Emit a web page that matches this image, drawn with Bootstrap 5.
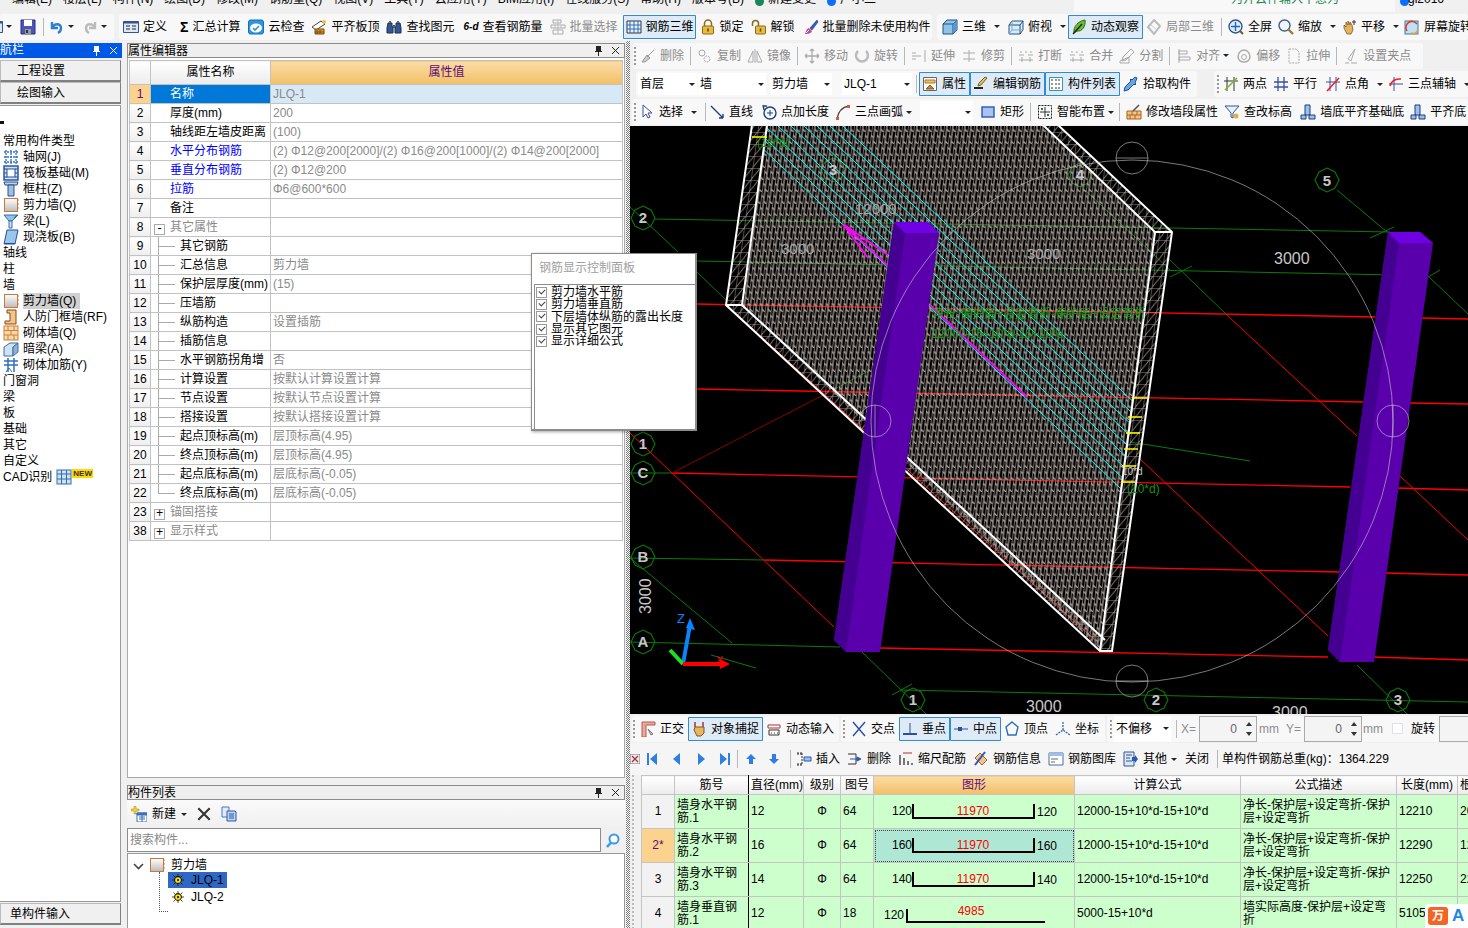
<!DOCTYPE html>
<html lang="zh-CN">
<head>
<meta charset="UTF-8">
<title>钢筋三维</title>
<link href="https://cdn.jsdelivr.net/npm/bootstrap@5.3.1/dist/css/bootstrap.min.css" rel="stylesheet">
<style>
html,body{height:928px;overflow:hidden}
body{width:1468px;position:relative;background:#f0f0f0;color:#000;font:12px/16px "Liberation Sans","Noto Sans CJK SC",sans-serif}
.ic{width:16px;height:16px;flex:none}
.ic-s{width:12px;height:12px}
.top-menu{height:12px;overflow:hidden;display:flex;white-space:nowrap;gap:11px}
.top-menu>span{margin-top:-9px;flex:none}
.menu-first{margin-left:12px}
.menu-dot{width:9px;height:9px;border-radius:50%;margin:-3px -7px 0 0;flex:none}
.top-hint{margin:0 0 0 auto;width:321px;height:12px;background:#f8f8f8;padding-left:157px;flex:none;overflow:hidden}
.top-hint span{display:block;margin-top:-9px;color:#198754}
.top-user{width:73px;display:flex;gap:6px;margin-left:-11px;padding-left:5px;flex:none;overflow:hidden}
.top-user span{margin-top:-9px}
.tools-row{display:flex;align-items:center;white-space:nowrap;overflow:hidden;gap:1px}
.row-a,.row-b,.row-e{height:29px}
.row-c,.row-d{height:28px}
.row-f{height:32px;background:#f5f5f5}
.tb-band{display:flex;align-items:center;height:26px;background:#f8f8f8;border-radius:3px;flex:none}
.tb-item{display:flex;align-items:center;gap:4px;padding:0 3px;height:24px;flex:none}
.tb-off{color:#8c8c8c}
.tb-on{background:#deebf7;box-shadow:inset 0 0 0 1px #2f8bd8;border-radius:1px}
.tb-on.box-51{width:51px}
.tb-on.box-73{width:73px}
.tb-on.box-75{width:75px}
.caret-mk{width:0;height:0;border:3px solid transparent;border-top:3px solid #222;border-bottom:0;flex:none;margin:0 5px}
.caret-mk.car-nl{margin-left:0}
.caret-mk.car-s{margin-right:2px}
.caret-mk.car-r4{margin:0 4px 0 0}
.tb-sep{width:1px;height:18px;background:#b8b8b8;margin:0 4px;flex:none}
.tb-sep.sep-mid{margin:0 3px}
.tb-sep.sep-a{margin:0 3px 0 4px}
.tb-sep.sep-b{margin:0 2px 0 4px}
.tb-sep.sep-c{margin:0 0 0 3px}
.tb-sep.sep-d{margin:0 0 0 7px}
.tb-sep.sep-e{margin:0 0 0 4px}
.tb-sep.sep-f{margin:0 4px 0 5px}
.grip{width:2px;height:18px;margin:0 4px;background:repeating-linear-gradient(#999 0 2px,transparent 2px 4px);flex:none}
.grip.gr-b{margin:0 1px}
.grip.gr-c{margin:0 1px 0 3px}
.grip.gr-d{margin:0 0 0 2px}
.grip.gr-e{margin:0 2px 0 1px}
.grip.gr-f{margin:0 3px 0 2px}
.grip.gr-g{margin:0 2px 0 3px}
.mg1{margin-left:1px}
.mg2{margin-left:2px}
.mg3{margin-left:3px}
.mg4{margin-left:4px}
.mg6{margin-left:6px}
.mg7{margin-left:7px}
.mg8{margin-left:8px}
.mg-n3{margin-left:-3px}
.mg-n16{margin-left:-16px}
.band-a1{width:114px}
.band-a2{width:813px;margin-left:4px;padding-left:1px}
.band-a3{width:531px;margin-left:4px;padding-left:0}
.band-b{width:790px;margin-left:3px}
.band-c1{width:561px;margin-left:6px}
.band-c2{width:260px;margin-left:16px}
.band-d{width:836px;margin-left:2px}
.band-e1{width:207px;margin-left:2px}
.band-e2{width:264px;margin-left:1px}
.band-e3{width:361px;margin-left:1px}
.fake-select{display:flex;align-items:center;justify-content:space-between;background:#fff;height:22px;padding:0 2px;flex:none}
.sel-59{width:59px;margin-left:2px}
.sel-68{width:68px;margin-left:1px}
.sel-62{width:62px;margin-left:4px}
.sel-70{width:70px;margin-left:10px}
.sel-53{width:53px;margin-left:8px;justify-content:flex-end}
.sel-57{width:57px;height:26px}
.main-area{display:flex;height:887px}
.nav-pane{width:122px;padding-top:2px;flex:none;display:flex;flex-direction:column}
.nav-title{height:15px;background:#0058e6;color:#fff;display:flex;align-items:center;justify-content:space-between;padding-right:4px;overflow:hidden;line-height:15px;flex:none}
.nav-title b{font-weight:400;margin-left:-12px;white-space:nowrap}
.pin-x{display:flex;gap:8px;align-items:center}
.nav-btn.btn{display:block;width:121px;height:22px;padding:0 0 0 16px;text-align:left;background:#f0f0f0;border:1px solid #bbb;border-right-color:#808080;border-bottom:2px solid #808080;border-radius:0;font-size:12px;line-height:20px;color:#000;flex:none}
.nav-first{margin-top:2px}
.nav-btn.nav-last{padding-left:9px;margin:1px 0 3px}
.nav-tree{flex:1;background:#fff;border:1px solid #9a9a9a;border-left:0;width:121px;margin-top:1px;padding-top:27px;position:relative}
.nav-tree .list-group-item{padding:0 0 0 3px;border:0;height:16px;line-height:16px;font-size:12px;background:transparent;display:flex;align-items:center;gap:4px;white-space:nowrap;color:#000}
.nav-tree .pick span{background:#d0d0d0}
.nav-mark{position:absolute;left:0;top:15px;width:4px;height:3px;background:#111}
.new-mk{font:700 8px/9px "Liberation Sans",sans-serif;background:#ffd800;color:#333;align-self:flex-start;margin-left:-4px;padding:0 1px}
.prop-pane{width:504px;padding:2px 1px 0 5px;flex:none;display:flex;flex-direction:column}
.pane-title{height:15px;background:#efefef;border:1px solid #8c8c8c;display:flex;justify-content:space-between;align-items:center;padding-right:4px;line-height:14px;flex:none}
.pane-low{margin-top:7px}
.prop-body{height:720px;background:#fff;border:1px solid #aaa;border-top:0;padding:2px 1px;flex:none}
.table.grid-prop{width:494px;table-layout:fixed;margin:0;border-collapse:collapse;font-size:12px}
.table.grid-prop>:not(caption)>*>*{padding:0 2px;height:19px;line-height:17px;border:1px solid #c2c2c2;box-shadow:none;background:#fff;color:#000;white-space:nowrap;overflow:hidden;position:relative;vertical-align:middle}
.table.grid-prop thead th{height:24px;font-weight:400;text-align:center;background:linear-gradient(#fff,#ececec)}
.table.grid-prop thead th.hd-on{background:linear-gradient(#fbdca6,#f2c066);color:#5e0a78}
.table.grid-prop td.rn{text-align:center;background:linear-gradient(#fff,#eee)}
.table.grid-prop td.rn-on{background:#fbd38e;color:#5e0a78}
.table.grid-prop td.nm{padding-left:19px}
.table.grid-prop td.nm-on{background:#0078d7;color:#fff}
.table.grid-prop td.vl{color:#8a8a8a}
.table.grid-prop td.vl-on{background:#d7e8f7;color:#8a8a8a}
.table.grid-prop td.lnk{color:#0000ff}
.table.grid-prop td.gr{color:#8a8a8a}
.table.grid-prop td.sub{padding-left:29px}
.table.grid-prop td.sub::before{content:"";position:absolute;left:7px;top:-1px;bottom:-1px;border-left:1px solid #aaa}
.table.grid-prop td.sub::after{content:"";position:absolute;left:7px;top:9px;width:17px;border-top:1px solid #aaa}
.table.grid-prop td.sub-end::before{bottom:9px}
.cw-21{width:21px}
.cw-120{width:120px}
.cw-33{width:33px}
.cw-74{width:74px}
.cw-55{width:55px}
.cw-37{width:37px}
.cw-201{width:201px}
.cw-166{width:166px}
.cw-156{width:156px}
.cw-61{width:61px}
.cw-24{width:24px}
.tg-box{display:inline-flex;width:11px;height:11px;border:1px solid #aaa;margin:0 5px 0 1px;vertical-align:-1px;align-items:center;justify-content:center;font:12px/9px "Liberation Mono",monospace;color:#000}
.list-tools{height:28px;background:linear-gradient(#fafafa,#f0f0f0);display:flex;align-items:center;gap:5px;padding-left:4px;flex:none}
.search-box{height:25px;flex:none}
.search-box .form-control{height:24px;border:1px solid #8c8c8c;border-radius:0;font-size:12px;padding:0 2px;background:#fff;color:#888;line-height:20px}
.search-box .form-control::placeholder{color:#888}
.search-box .input-group-text{width:25px;padding:0;justify-content:center;border:0;border-radius:0;background:#f0f0f0}
.comp-tree{flex:1;background:#fff;border:1px solid #9a9a9a;border-bottom:0;position:relative}
.tree-line{position:absolute;display:flex;align-items:center;gap:7px;white-space:nowrap;height:16px}
.tl-root{left:21px;top:3px;gap:6px}
.tl-one{left:40px;top:18px}
.tl-two{left:44px;top:35px}
.tree-hit{background:#2f67c4;color:#000;padding:0 3px 0 4px}
.tree-dots{position:absolute;left:31px;top:18px;width:9px;height:40px;border-left:1px dotted #555;border-bottom:1px dotted #555}
.tree-arrow{position:absolute;left:5px;top:9px}
.splitter{width:4px;flex:none;background:repeating-conic-gradient(#777 0 25%,#fff 0 50%) 0 0/2px 2px}
.right-pane{width:838px;flex:none;position:relative;overflow:hidden}
.canvas-3d{display:block;width:838px;height:588px;background:#000}
.num-box{width:58px;height:26px;margin-left:3px;background:#f4f4f4;border:1px solid #aaa;display:flex;align-items:center;justify-content:flex-end;color:#666;padding-right:19px;position:relative;flex:none}
.num-box::after{content:"";position:absolute;right:4px;top:5px;border:3px solid transparent;border-bottom:4px solid #333;border-top:0}
.num-box::before{content:"";position:absolute;right:4px;bottom:5px;border:3px solid transparent;border-top:4px solid #333;border-bottom:0}
.num-end{width:40px;padding-right:0;margin-left:4px}
.num-end::before,.num-end::after{display:none}
.lead-f{width:13px;flex:none;display:flex}
.rebar-wrap{position:relative;padding-left:11px;height:160px;background:repeating-linear-gradient(#bbb 0 2px,#f0f0f0 2px 4px) 2px 0/2px 100% no-repeat,#f0f0f0}
.table.grid-rebar{width:840px;table-layout:fixed;margin:0;border-collapse:collapse;font-size:12px}
.table.grid-rebar>:not(caption)>*>*{padding:0 2px;height:34px;line-height:13px;border:1px solid #c4c4c4;box-shadow:none;background:#ccffcc;color:#000;vertical-align:middle;overflow:hidden}
.table.grid-rebar thead th{height:19px;font-weight:400;text-align:center;white-space:nowrap;background:linear-gradient(#fff,#ececec);line-height:16px}
.table.grid-rebar thead th.hd-on{background:linear-gradient(#fbdca6,#f2c066);color:#5e0a78}
.table.grid-rebar td.rn{text-align:center;background:#f2f2f2}
.table.grid-rebar td.rn-on{background:#fbd38e;color:#5e0a78}
.table.grid-rebar td.bar-end,.table.grid-rebar th.bar-end{border-right:1px solid #000}
.table.grid-rebar td.mid{text-align:center}
.table.grid-rebar td.shp{padding:0}
.table.grid-rebar td.shp-on{background:#aee8d4;outline:1px dotted #444;outline-offset:-2px}
.shp-svg{display:block;width:200px;height:32px;font:12px "Liberation Sans",sans-serif}
.float-panel{position:absolute;left:531px;top:253px;width:166px;height:178px;background:#fff;border:1px solid #8c8c8c;border-width:1px 2px 2px 1px;box-shadow:1px 1px 3px rgba(0,0,0,.35);z-index:5}
.float-title{height:30px;padding:6px 0 0 7px;color:#a0a0a0;line-height:16px}
.float-list{position:absolute;left:2px;right:0;top:30px;bottom:0;border:1px solid #8c8c8c;border-right:0;border-bottom:0;padding:1px 0 0 1px;line-height:12px}
.float-list .form-check{display:flex;align-items:center;gap:4px;height:12.3px;min-height:0;padding:0;margin:0;white-space:nowrap}
.float-list .form-check-input{width:11px;height:11px;margin:0;float:none;border:1px solid #999;border-radius:0;background-color:#fff;background-image:none;position:relative}
.float-list .form-check-input::after{content:"";position:absolute;left:2px;top:1px;width:6px;height:4px;border-left:1.5px solid #444;border-bottom:1.5px solid #444;transform:rotate(-45deg)}
.form-check-input.rotate-box{flex:none;width:11px;height:11px;margin:0 0 0 9px;border-radius:0}
.badge-float{position:absolute;right:0;bottom:0;width:43px;height:24px;background:#fff;border-radius:4px 0 0 0;display:flex;align-items:center;gap:4px;padding-left:3px;z-index:6}
.badge-wan{width:20px;height:18px;background:#f26522;border-radius:3px;color:#fff;text-align:center;font-weight:700;line-height:18px}
.badge-a{color:#1e88e5;font:700 17px/18px "Liberation Sans",sans-serif}
.cad-txt{font:10px/14px "Liberation Sans","Noto Sans CJK SC",sans-serif;fill:#c8c8c8}
.cad-big{font:16px "Liberation Sans",sans-serif;fill:#c8c8c8}
.cad-lbl{font:700 15px "Liberation Sans",sans-serif;fill:#c8c8c8;text-anchor:middle}
.cad-dim{font:15px "Liberation Sans",sans-serif;fill:#a8a8a8}
.cad-grn{font:12px "Liberation Sans","Noto Sans CJK SC",sans-serif;fill:#0c9a0c}
.cad-z{font:13px "Liberation Sans",sans-serif;fill:#0a84ff}
.cad-x{font:11px "Liberation Sans",sans-serif;fill:#f00}
.sig{font-size:14px}
.six-d{font-size:10px}
</style>
</head>
<body>

<svg width="0" height="0" class="position-absolute">
<defs>
<symbol id="i-save" viewBox="0 0 16 16"><path d="M1 1h14v14H1z" fill="#4a55b8" stroke="#2a2f80"/><path d="M4 1h8v6H4z" fill="#fff"/><path d="M5 10h6v5H5z" fill="#999"/><path d="M6 11h2v3H6z" fill="#333"/></symbol>
<symbol id="i-undo" viewBox="0 0 16 16"><path d="M3 3v6h6M3 9c2-5 9-5 9 0 0 2-1 4-3 5" fill="none" stroke="#2f7fd0" stroke-width="2.4"/></symbol>
<symbol id="i-redo" viewBox="0 0 16 16"><path d="M13 3v6H7M13 9c-2-5-9-5-9 0 0 2 1 4 3 5" fill="none" stroke="#bbb" stroke-width="2.4"/></symbol>
<symbol id="i-define" viewBox="0 0 16 16"><path d="M.5 2.5h15v11H.5z" fill="#dfe8f5" stroke="#33558f"/><path d="M.5 2.5h15v2H.5z" fill="#33558f"/><path d="M3 7h4M3 10h4M9 7h4M9 10h4" stroke="#223" /></symbol>
<symbol id="i-cloud" viewBox="0 0 16 16"><rect x=".5" y="1" width="15" height="14" rx="2" fill="#2e95e0" stroke="#1a6fb8"/><ellipse cx="8" cy="9" rx="6" ry="4.5" fill="#fff"/><path d="M5 9l2 2 4-4" fill="none" stroke="#2e95e0" stroke-width="1.6"/></symbol>
<symbol id="i-flush" viewBox="0 0 16 16"><path d="M1 8l9-6 4 3-9 6z" fill="#fff" stroke="#444"/><path d="M4 10h9v5H4z" fill="#e09a2a" stroke="#7a4a10"/><path d="M6 11v4M9 11v4M4 13h9" stroke="#7a4a10"/><circle cx="13" cy="3" r="2" fill="#e9c63a"/></symbol>
<symbol id="i-find" viewBox="0 0 16 16"><path d="M2 4h4v3l1 2v5H1V9zM10 4h4l1 5v5H9V9l1-2z" fill="#33568f" stroke="#1b2f55"/><path d="M7 6h2v3H7z" fill="#556"/><path d="M3 2h2v2H3zM11 2h2v2h-2z" fill="#667"/></symbol>
<symbol id="i-batch" viewBox="0 0 16 16"><path d="M3 1h8v3H3zM1 6h14v3H1zM3 11h10v4H3z" fill="none" stroke="#aaa"/><path d="M8 1v14M5 6v3M11 6v3" stroke="#bbb"/></symbol>
<symbol id="i-grid3d" viewBox="0 0 16 16"><path d="M1 2h14v12H1z" fill="#e8f1fb" stroke="#333"/><path d="M4 2v12M8 2v12M12 2v12M1 6h14M1 10h14" stroke="#2d6fb8"/></symbol>
<symbol id="i-lock" viewBox="0 0 16 16"><path d="M4.500 7V4.500a3.500 3.500 0 0 1 7 0V7" fill="none" stroke="#8a6a20" stroke-width="1.500"/><rect x="2.500" y="7" width="11" height="8" rx="1" fill="#e8bb3a" stroke="#8a6a20"/><path d="M8 9.500v3" stroke="#5a3f10" stroke-width="1.500"/></symbol>
<symbol id="i-unlock" viewBox="0 0 16 16"><path d="M1.500 7V4.500a3 3 0 0 1 6 0V7" fill="none" stroke="#8a6a20" stroke-width="1.500"/><rect x="4.500" y="7" width="10" height="8" rx="1" fill="#e8bb3a" stroke="#8a6a20"/><path d="M9.500 9.500v3" stroke="#5a3f10" stroke-width="1.500"/></symbol>
<symbol id="i-brush" viewBox="0 0 16 16"><path d="M14 1L7 9l2 2 6-8z" fill="#3b5bb5" stroke="#223a80" stroke-width=".6"/><path d="M6 9l3 3c-1 3-5 3-7 3 1-2 1-5 4-6z" fill="#c24aa0"/><path d="M3 14l3-3" stroke="#fff"/></symbol>
<symbol id="i-cube" viewBox="0 0 16 16"><path d="M1 5l4-4h10v10l-4 4H1z" fill="#8fc3ea" stroke="#24517f"/><path d="M1 5h10v10M11 5l4-4" fill="none" stroke="#24517f"/><path d="M11 5l4-4v10l-4 4z" fill="#5a97cc"/></symbol>
<symbol id="i-wire" viewBox="0 0 16 16"><path d="M4 2h11v9l-3 4H1V6z" fill="#d9ecf9" stroke="#24517f"/><path d="M1 6h11v9M12 6l3-4" fill="none" stroke="#24517f"/><path d="M1 15l3-4h11M4 2v9" fill="none" stroke="#7aa7cf"/></symbol>
<symbol id="i-orbit" viewBox="0 0 16 16"><path d="M3 14C2 8 7 2 14 1c1 6-3 12-8 11z" fill="#6cc02c" stroke="#2f6a10"/><path d="M2 15L11 5" stroke="#222" stroke-width="1.400"/></symbol>
<symbol id="i-local" viewBox="0 0 16 16"><path d="M8 1l6 6-6 8-6-7z" fill="none" stroke="#bbb" stroke-width="2"/><path d="M5 6l6 5" stroke="#ccc"/></symbol>
<symbol id="i-full" viewBox="0 0 16 16"><circle cx="7.500" cy="7.500" r="6.500" fill="#dfeefa" stroke="#33568f" stroke-width="1.400"/><path d="M7.500 3v9M3 7.500h9" stroke="#1f66c0" stroke-width="1.400"/><path d="M12 12l3 3" stroke="#7a5a20" stroke-width="2"/></symbol>
<symbol id="i-zoom" viewBox="0 0 16 16"><circle cx="6.500" cy="6.500" r="5.500" fill="#eef5fb" stroke="#3f5f8f" stroke-width="1.400"/><path d="M10 10l5 5" stroke="#a07a30" stroke-width="2.400"/></symbol>
<symbol id="i-hand" viewBox="0 0 16 16"><path d="M3 9V6l2 2V3l2 3V2l2 4V3l2 3 1 5-2 4H6z" fill="#e6b45e" stroke="#7a5a20" stroke-width=".8"/><path d="M13 1v5M11 3h4" stroke="#333"/></symbol>
<symbol id="i-rotate" viewBox="0 0 16 16"><rect x="1" y="2" width="13" height="13" fill="#bfe0f5" stroke="#2f7fb8"/><path d="M3 12A6 6 0 0 1 13 5" fill="none" stroke="#e23a2a" stroke-width="1.600"/><path d="M14 11a5 5 0 0 1-7 3" fill="none" stroke="#e8a020" stroke-width="1.600"/></symbol>
<symbol id="i-del" viewBox="0 0 16 16"><path d="M14 2L7 9M2 14l5-7 3 3-5 4z" fill="#ccc" stroke="#999"/></symbol>
<symbol id="i-copy" viewBox="0 0 16 16"><circle cx="5" cy="5" r="3" fill="none" stroke="#aaa"/><circle cx="10" cy="11" r="3" fill="none" stroke="#aaa" stroke-dasharray="2 1"/></symbol>
<symbol id="i-mirror" viewBox="0 0 16 16"><path d="M8 1v14M6 3L1 14h5zM10 3l5 11h-5z" fill="none" stroke="#aaa"/></symbol>
<symbol id="i-move" viewBox="0 0 16 16"><path d="M8 1v14M1 8h14M8 1L6 3M8 1l2 2M8 15l-2-2M8 15l2-2M1 8l2-2M1 8l2 2M15 8l-2-2M15 8l-2 2" fill="none" stroke="#aaa" stroke-width="1.300"/></symbol>
<symbol id="i-spin" viewBox="0 0 16 16"><path d="M4 3a6 6 0 1 0 8 0" fill="none" stroke="#bbb" stroke-width="2.500"/></symbol>
<symbol id="i-extend" viewBox="0 0 16 16"><path d="M14 2v12M1 8h9M1 5h4M1 11h4" fill="none" stroke="#aaa"/></symbol>
<symbol id="i-trim" viewBox="0 0 16 16"><path d="M8 2v12M2 5h12M2 11h12" fill="none" stroke="#aaa"/></symbol>
<symbol id="i-break" viewBox="0 0 16 16"><path d="M1 7h5M10 7h5M3 3v2M8 3v2M13 3v2M1 12h14M4 9v5M12 9v5" fill="none" stroke="#aaa"/></symbol>
<symbol id="i-split" viewBox="0 0 16 16"><path d="M1 13l9-4v6H1zM12 1l3 3-8 8-4 1 1-4z" fill="none" stroke="#aaa"/></symbol>
<symbol id="i-align" viewBox="0 0 16 16"><path d="M3 1v14M3 3h8v3H3zM3 9h11v3H3z" fill="none" stroke="#aaa"/></symbol>
<symbol id="i-offset" viewBox="0 0 16 16"><path d="M8 2c4 0 6 4 6 7s-3 5-6 5-6-2-6-5 2-7 6-7z" fill="none" stroke="#aaa" stroke-width="1.500"/><circle cx="8" cy="9" r="2.500" fill="none" stroke="#aaa"/></symbol>
<symbol id="i-stretch" viewBox="0 0 16 16"><path d="M3 1h7l3 3v11H3z" fill="none" stroke="#aaa" stroke-dasharray="2 1"/></symbol>
<symbol id="i-grip" viewBox="0 0 16 16"><path d="M12 1L5 11l3 2zM2 15h4M8 15h6" fill="none" stroke="#aaa"/></symbol>
<symbol id="i-prop" viewBox="0 0 16 16"><path d="M1.500 1.500h13v13h-13z" fill="#fff" stroke="#666"/><path d="M3 4h10v3H3z" fill="#f0c26a" stroke="#a87820"/><path d="M4 13l4-4 4 4z" fill="#c28a2a" stroke="#7a5a20"/></symbol>
<symbol id="i-edit" viewBox="0 0 16 16"><path d="M1 12h9" stroke="#222" stroke-width="2"/><path d="M14 2L8 9l-3 1 1-3 6-6z" fill="#e5c25a" stroke="#7a5a20"/></symbol>
<symbol id="i-list" viewBox="0 0 16 16"><path d="M1.500 1.500h13v13h-13z" fill="#fff" stroke="#39a"/><path d="M3 4h2M3 8h2M3 12h2M7 4h6M7 8h6M7 12h6" stroke="#333" stroke-dasharray="2 1"/></symbol>
<symbol id="i-pick" viewBox="0 0 16 16"><path d="M14 2l-2-1-3 3-1-1-1 1 1 1-6 6-1 4 4-1 6-6 1 1 1-1-1-1z" fill="#6aa7e0" stroke="#1f4f9f"/></symbol>
<symbol id="i-two" viewBox="0 0 16 16"><path d="M4 1v14M11 1v14M1 5h14M2 14L14 2" fill="none" stroke="#333"/><path d="M2 14L14 2" stroke="#7cb82f" stroke-width="1.600"/></symbol>
<symbol id="i-para" viewBox="0 0 16 16"><path d="M5 1v14M11 1v14M1 6h14M1 11h14" stroke="#3a4fa0" stroke-width="1.300"/></symbol>
<symbol id="i-angle" viewBox="0 0 16 16"><path d="M5 1v14M11 1v14M1 6h14" stroke="#3a4fa0"/><path d="M2 15L14 2" stroke="#e22" stroke-width="1.500"/></symbol>
<symbol id="i-aux" viewBox="0 0 16 16"><path d="M6 1v14M1 8h14" stroke="#3a4fa0"/><path d="M2 10Q4 2 13 3" fill="none" stroke="#e22" stroke-width="1.500"/></symbol>
<symbol id="i-arrow" viewBox="0 0 16 16"><path d="M4 1v12l3-3 2 4 2-1-2-4h4z" fill="#fff" stroke="#3a4fa0"/></symbol>
<symbol id="i-line" viewBox="0 0 16 16"><path d="M2 2l12 12M14 14v-4M14 14h-4" fill="none" stroke="#1b3f80" stroke-width="1.400"/></symbol>
<symbol id="i-addlen" viewBox="0 0 16 16"><circle cx="9" cy="9" r="6" fill="none" stroke="#1b3f80" stroke-width="1.400"/><path d="M9 6v6M6 9h6" stroke="#1b3f80"/><path d="M2 1l1 5M3 2h3" stroke="#1b3f80" stroke-width="1.400"/></symbol>
<symbol id="i-arc" viewBox="0 0 16 16"><path d="M2 15C3 8 7 3 14 2" fill="none" stroke="#444" stroke-width="1.400"/><path d="M1 13h3v3H1zM12 1h3v3h-3z" fill="#e2552a"/></symbol>
<symbol id="i-rect" viewBox="0 0 16 16"><rect x="2" y="3" width="12" height="10" fill="#a8c4ee" stroke="#2a58b5" stroke-width="1.400"/></symbol>
<symbol id="i-smart" viewBox="0 0 16 16"><rect x="1.500" y="1.500" width="13" height="13" fill="none" stroke="#222" stroke-dasharray="2 1"/><path d="M8 3v10M3 8h10" stroke="#333"/><path d="M4 4h2v2H4zM10 10h2v2h-2z" fill="#2a7a2a"/></symbol>
<symbol id="i-segm" viewBox="0 0 16 16"><path d="M1 7h14v8H1z" fill="#f3c48a" stroke="#a8651e"/><path d="M1 11h14M6 7v4M11 7v4M4 11v4M9 11v4" stroke="#a8651e"/><path d="M13 1L7 7" stroke="#555" stroke-width="1.600"/></symbol>
<symbol id="i-elev" viewBox="0 0 16 16"><path d="M1 2h14l-6 7v5l-2-1V9z" fill="#e6f0fa" stroke="#33568f"/><circle cx="12" cy="12" r="2.500" fill="#e0b040"/></symbol>
<symbol id="i-base" viewBox="0 0 16 16"><path d="M5 1h5v10H5zM1 11h5v4H1zM9 11h6v4H9z" fill="#9cc0e8" stroke="#1e3f80"/></symbol>
<symbol id="i-orth" viewBox="0 0 16 16"><path d="M2 1h13v3H6v12H2z" fill="#e8a8a0" stroke="#b85a50"/><path d="M8 8l5 5-2 1z" fill="#ccc" stroke="#777"/></symbol>
<symbol id="i-snap" viewBox="0 0 16 16"><path d="M4 1v5M12 1v5" stroke="#a33" stroke-width="1.500"/><path d="M3 9l1-3h9v6l-3 3H6z" fill="#e8b660" stroke="#7a5a20"/></symbol>
<symbol id="i-dyn" viewBox="0 0 16 16"><path d="M2 4h12v3H2z" fill="#fff" stroke="#a33"/><path d="M3 9h10v5H3z" fill="#fff" stroke="#333"/><path d="M5 12h1M8 12h1M11 12h1" stroke="#333"/></symbol>
<symbol id="i-cross" viewBox="0 0 16 16"><path d="M2 1l12 14M14 1L2 15" stroke="#2a4fa0" stroke-width="1.400"/></symbol>
<symbol id="i-perp" viewBox="0 0 16 16"><path d="M1 13h14" stroke="#2a4fa0" stroke-width="2"/><path d="M8 2v11" stroke="#2a4fa0"/></symbol>
<symbol id="i-midp" viewBox="0 0 16 16"><path d="M1 8h14" stroke="#2a4fa0"/><rect x="5" y="6" width="4" height="4" fill="#2a4fa0"/></symbol>
<symbol id="i-top" viewBox="0 0 16 16"><path d="M8 1l6 5-2 8H4L2 6z" fill="none" stroke="#2a6fb8" stroke-width="1.400"/></symbol>
<symbol id="i-coord" viewBox="0 0 16 16"><path d="M8 1v8M1 14l7-5 7 5" fill="none" stroke="#2a6fb8" stroke-width="1.300" stroke-dasharray="2 1"/></symbol>
<symbol id="i-first" viewBox="0 0 16 16"><path d="M3 2h2v12H3zM13 2v12L6 8z" fill="#2f7fe0"/></symbol>
<symbol id="i-prev" viewBox="0 0 16 16"><path d="M11 2v12L4 8z" fill="#2f7fe0"/></symbol>
<symbol id="i-next" viewBox="0 0 16 16"><path d="M5 2v12l7-6z" fill="#2f7fe0"/></symbol>
<symbol id="i-last" viewBox="0 0 16 16"><path d="M11 2h2v12h-2zM3 2v12l7-6z" fill="#2f7fe0"/></symbol>
<symbol id="i-up" viewBox="0 0 16 16"><path d="M8 3l5 5h-3v5H6V8H3z" fill="#2f7fe0"/></symbol>
<symbol id="i-down" viewBox="0 0 16 16"><path d="M8 13l5-5h-3V3H6v5H3z" fill="#2f7fe0"/></symbol>
<symbol id="i-ins" viewBox="0 0 16 16"><path d="M1 2h5v1H1zM1 13h5v1H1zM6 2v12" stroke="#333" fill="none" stroke-dasharray="2 1"/><path d="M8 6h7v4H8z" fill="#9cc0e8" stroke="#2a58b5"/></symbol>
<symbol id="i-rm" viewBox="0 0 16 16"><path d="M1 3h8M1 13h8M9 3v10" stroke="#333" fill="none"/><path d="M3 8h7V6l4 2-4 2V8" fill="#2a58b5" stroke="#2a58b5"/></symbol>
<symbol id="i-scale" viewBox="0 0 16 16"><path d="M2 14V4M6 14V7M10 14v-4M14 14v-2" stroke="#333" stroke-width="1.300"/><path d="M5 2h9" stroke="#a33"/></symbol>
<symbol id="i-info" viewBox="0 0 16 16"><path d="M2 7l5-5 7 7-5 5z" fill="#f3c48a" stroke="#a8651e"/><path d="M12 1L2 14" stroke="#2a58b5" stroke-width="2"/></symbol>
<symbol id="i-lib" viewBox="0 0 16 16"><path d="M1 2h14v12H1z" fill="#fff" stroke="#4a6ea8"/><path d="M1 2h14v3H1z" fill="#9cc0e8"/><path d="M3 8h7M3 11h4" stroke="#666"/></symbol>
<symbol id="i-other" viewBox="0 0 16 16"><path d="M1 1h10v14H1z" fill="#dbe7f5" stroke="#33568f"/><path d="M3 4h6M3 7h4M3 10h6" stroke="#33568f"/><path d="M9 6h3V4l3 4-3 4v-2H9z" fill="#2a58b5"/></symbol>
<symbol id="i-axisnet" viewBox="0 0 16 16"><path d="M3 1v14M8 1v14M13 1v14M1 3h14M1 8h14M1 13h14" stroke="#2f6fc0" stroke-width="1.300" stroke-dasharray="2 1"/></symbol>
<symbol id="i-raft" viewBox="0 0 16 16"><rect x="1" y="1" width="14" height="14" fill="#d4e3f3" stroke="#1f4f9f" stroke-width="1.400"/><rect x="4" y="4" width="8" height="8" fill="#fff" stroke="#1f4f9f"/><path d="M1 4h3M1 8h3M1 12h3M12 4h3M12 8h3M12 12h3" stroke="#1f4f9f"/></symbol>
<symbol id="i-col" viewBox="0 0 16 16"><path d="M1 1h14l-1 3H2z" fill="#bcd4ee" stroke="#2f4f80"/><path d="M5 4h6v11H5z" fill="#9cc0e8" stroke="#2f4f80"/></symbol>
<symbol id="i-shear" viewBox="0 0 16 16"><rect x="1.500" y="1.500" width="13" height="13" fill="url(#shear-g)" stroke="#c8783a"/><path d="M15 3h1M15 7h1M15 11h1" stroke="#c8783a"/></symbol>
<linearGradient id="shear-g" x1="0" y1="0" x2="0" y2="1"><stop offset="0" stop-color="#fff"/><stop offset="1" stop-color="#bbb"/></linearGradient>
<symbol id="i-beam" viewBox="0 0 16 16"><path d="M1 2h14L9 8H6z" fill="#8fc3ea" stroke="#2f6fa8"/><path d="M6 8v7h3V8z" fill="#cde3f5" stroke="#2f6fa8"/><path d="M11 5l3-3" stroke="#2f6fa8"/></symbol>
<symbol id="i-slab" viewBox="0 0 16 16"><path d="M4 1h11l-3 14H1z" fill="#9cc5ec" stroke="#1f4f9f"/><path d="M2 15h10v-1H2z" fill="#1f4f9f"/></symbol>
<symbol id="i-door" viewBox="0 0 16 16"><path d="M4 1h9v14H2v-3h5V4H4z" fill="#f3c48a" stroke="#8a4a10"/></symbol>
<symbol id="i-brick" viewBox="0 0 16 16"><rect x="1" y="1" width="14" height="14" fill="#f8d9b0" stroke="#d08030"/><path d="M1 5.500h14M1 10h14M5 1v4.500M11 1v4.500M8 5.500V10M5 10v5M11 10v5" stroke="#d08030"/></symbol>
<symbol id="i-hbeam" viewBox="0 0 16 16"><path d="M1 6l6-4h8l-5 4v9H1z" fill="#cde3f5" stroke="#3f6f9f"/><path d="M10 6v9l5-4V2z" fill="#8fb3d3" stroke="#3f6f9f"/></symbol>
<symbol id="i-rein" viewBox="0 0 16 16"><path d="M1 4h14M1 8h14M5 1v14M11 1v14" stroke="#2f6fc0" stroke-width="1.500"/><path d="M3 15l3-4 3 4" fill="none" stroke="#2f6fc0"/></symbol>
<symbol id="i-cad" viewBox="0 0 16 16"><rect x="1" y="1" width="14" height="14" fill="#cfe2f5" stroke="#2f6fa8"/><path d="M5.500 1v14M10.500 1v14M1 5h14M1 10h14" stroke="#2f6fa8"/></symbol>
<symbol id="i-new" viewBox="0 0 16 16"><path d="M3 0h2v3h3v2H5v3H3V5H0V3h3z" fill="#f0d040" stroke="#a88a10" stroke-width=".5"/><path d="M6 7h10v9H6z" fill="#fff" stroke="#3f6fb8"/><path d="M6 7h10v2H6zM8 11h6M8 13h6M11 9v7" fill="#3f6fb8" stroke="#3f6fb8"/></symbol>
<symbol id="i-dup" viewBox="0 0 16 16"><path d="M1 1h7v10H1z" fill="#dfeafa" stroke="#4a78c0"/><path d="M6 5h8l1 1v9H6z" fill="#bcd4f2" stroke="#2a58a5"/><path d="M8 8h5M8 10h5M8 12h5" stroke="#2a58a5"/></symbol>
<symbol id="i-glass" viewBox="0 0 16 16"><circle cx="9" cy="6" r="4.500" fill="#fff" stroke="#3a9be8" stroke-width="2"/><path d="M6 9.500L2 14" stroke="#3a9be8" stroke-width="2.600"/></symbol>
<symbol id="i-rebar" viewBox="0 0 16 16"><circle cx="8" cy="8" r="4.500" fill="#ffe600" stroke="#111" stroke-width="1.400"/><circle cx="8" cy="8" r="1.500" fill="#111"/><path d="M8 0v3M8 13v3M0 8h3M13 8h3M2 2l2 2M12 12l2 2M14 2l-2 2M2 14l2-2" stroke="#111"/></symbol>
<pattern id="mesh-face" width="6" height="12" patternUnits="userSpaceOnUse" patternTransform="skewX(-7.200)"><path d="M0 0V12M3 0V12M0 3L3 6M3 9L6 12" stroke="#b0a59e" stroke-width="1.200" fill="none"/></pattern>
<pattern id="mesh-strip" width="8" height="12" patternUnits="userSpaceOnUse" patternTransform="skewX(-8)"><path d="M0 0V12M0 0H8M0 12L8 0" stroke="#a89c94" stroke-width=".9" fill="none"/></pattern>
</defs>
</svg>

<div class="top-menu">
<span class="menu-first">编辑(E)</span><span>楼层(L)</span><span>构件(N)</span><span>绘图(D)</span><span>修改(M)</span><span>钢筋量(Q)</span><span>视图(V)</span><span>工具(T)</span><span>云应用(Y)</span><span>BIM应用(I)</span><span>在线服务(S)</span><span>帮助(H)</span><span>版本号(B)</span><i class="menu-dot bg-success"></i><span>新建变更</span><i class="menu-dot bg-primary"></i><span>广小二</span>
<div class="top-hint"><span>为开云件辅入干感为</span></div>
<div class="top-user"><i class="menu-dot bg-primary"></i><span>gl2016</span></div>
</div>

<div class="tools-row row-a">
<div class="tb-band band-a1">
<span class="tb-item mg-n16"><svg class="ic"><use href="#i-define"/></svg></span><span class="caret-mk car-nl"></span>
<span class="tb-item"><svg class="ic"><use href="#i-save"/></svg></span><span class="tb-sep sep-b"></span>
<span class="tb-item"><svg class="ic"><use href="#i-undo"/></svg></span><span class="caret-mk car-nl"></span>
<span class="tb-item"><svg class="ic"><use href="#i-redo"/></svg></span><span class="caret-mk car-nl mg4"></span>
</div>
<div class="tb-band band-a2">
<span class="tb-item"><svg class="ic"><use href="#i-define"/></svg>定义</span>
<span class="tb-item mg7"><b class="sig">Σ</b> 汇总计算</span>
<span class="tb-item mg2"><svg class="ic"><use href="#i-cloud"/></svg>云检查</span>
<span class="tb-item mg1"><svg class="ic"><use href="#i-flush"/></svg>平齐板顶</span>
<span class="tb-item mg1"><svg class="ic"><use href="#i-find"/></svg>查找图元</span>
<span class="tb-item mg3"><i class="fw-bold six-d">6-d</i>查看钢筋量</span>
<span class="tb-item tb-off mg1"><svg class="ic"><use href="#i-batch"/></svg>批量选择</span>
<span class="tb-item tb-on box-73 mg2"><svg class="ic"><use href="#i-grid3d"/></svg>钢筋三维</span>
<span class="tb-item mg1"><svg class="ic"><use href="#i-lock"/></svg>锁定</span>
<span class="tb-item mg1"><svg class="ic"><use href="#i-unlock"/></svg>解锁</span>
<span class="tb-item mg2"><svg class="ic"><use href="#i-brush"/></svg>批量删除未使用构件</span>
</div>
<div class="tb-band band-a3">
<span class="tb-item mg2"><svg class="ic"><use href="#i-cube"/></svg>三维</span><span class="caret-mk"></span>
<span class="tb-item"><svg class="ic"><use href="#i-wire"/></svg>俯视</span><span class="caret-mk"></span>
<span class="tb-item tb-on box-75 mg-n3"><svg class="ic"><use href="#i-orbit"/></svg>动态观察</span>
<span class="tb-item tb-off"><svg class="ic"><use href="#i-local"/></svg>局部三维</span><span class="tb-sep sep-a"></span>
<span class="tb-item"><svg class="ic"><use href="#i-full"/></svg>全屏</span>
<span class="tb-item"><svg class="ic"><use href="#i-zoom"/></svg>缩放</span><span class="caret-mk car-s"></span>
<span class="tb-item"><svg class="ic"><use href="#i-hand"/></svg>平移</span><span class="caret-mk car-s"></span>
<span class="tb-item"><svg class="ic"><use href="#i-rotate"/></svg>屏幕旋转</span>
</div>
</div>

<div class="main-area">

<div class="nav-pane">
<div class="nav-title"><b>导航栏</b><span class="pin-x"><svg width="9" height="11" viewBox="0 0 9 11"><path d="M2 1h5v5h1v1H1V6h1zM4 7h1v4H4z" fill="#fff"/></svg><svg width="9" height="9" viewBox="0 0 9 9"><path d="M1 1l7 7M8 1L1 8" stroke="#fff"/></svg></span></div>
<button class="btn nav-btn nav-first" type="button">工程设置</button>
<button class="btn nav-btn" type="button">绘图输入</button>
<div class="nav-tree">
<span class="nav-mark"></span>
<ul class="list-group list-group-flush">
<li class="list-group-item">常用构件类型</li>
<li class="list-group-item"><svg class="ic"><use href="#i-axisnet"/></svg><span>轴网(J)</span></li>
<li class="list-group-item"><svg class="ic"><use href="#i-raft"/></svg><span>筏板基础(M)</span></li>
<li class="list-group-item"><svg class="ic"><use href="#i-col"/></svg><span>框柱(Z)</span></li>
<li class="list-group-item"><svg class="ic"><use href="#i-shear"/></svg><span>剪力墙(Q)</span></li>
<li class="list-group-item"><svg class="ic"><use href="#i-beam"/></svg><span>梁(L)</span></li>
<li class="list-group-item"><svg class="ic"><use href="#i-slab"/></svg><span>现浇板(B)</span></li>
<li class="list-group-item">轴线</li>
<li class="list-group-item">柱</li>
<li class="list-group-item">墙</li>
<li class="list-group-item pick"><svg class="ic"><use href="#i-shear"/></svg><span class="pe-1">剪力墙(Q)</span></li>
<li class="list-group-item"><svg class="ic"><use href="#i-door"/></svg><span>人防门框墙(RF)</span></li>
<li class="list-group-item"><svg class="ic"><use href="#i-brick"/></svg><span>砌体墙(Q)</span></li>
<li class="list-group-item"><svg class="ic"><use href="#i-hbeam"/></svg><span>暗梁(A)</span></li>
<li class="list-group-item"><svg class="ic"><use href="#i-rein"/></svg><span>砌体加筋(Y)</span></li>
<li class="list-group-item">门窗洞</li>
<li class="list-group-item">梁</li>
<li class="list-group-item">板</li>
<li class="list-group-item">基础</li>
<li class="list-group-item">其它</li>
<li class="list-group-item">自定义</li>
<li class="list-group-item">CAD识别 <svg class="ic"><use href="#i-cad"/></svg><span class="new-mk">NEW</span></li>
</ul>
</div>
<button class="btn nav-btn nav-last" type="button">单构件输入</button>
</div>

<div class="prop-pane">
<div class="pane-title"><span>属性编辑器</span><span class="pin-x"><svg width="9" height="11" viewBox="0 0 9 11"><path d="M2 1h5v5h1v1H1V6h1zM4 7h1v4H4z" fill="#222"/></svg><svg width="9" height="9" viewBox="0 0 9 9"><path d="M1 1l7 7M8 1L1 8" stroke="#222"/></svg></span></div>
<div class="prop-body">
<table class="table grid-prop">
<colgroup><col class="cw-21"><col class="cw-120"><col></colgroup>
<thead><tr><th></th><th>属性名称</th><th class="hd-on">属性值</th></tr></thead>
<tbody>
<tr><td class="rn rn-on">1</td><td class="nm nm-on">名称</td><td class="vl-on">JLQ-1</td></tr>
<tr><td class="rn">2</td><td class="nm">厚度(mm)</td><td class="vl">200</td></tr>
<tr><td class="rn">3</td><td class="nm">轴线距左墙皮距离</td><td class="vl">(100)</td></tr>
<tr><td class="rn">4</td><td class="nm lnk">水平分布钢筋</td><td class="vl">(2) Φ12@200[2000]/(2) Φ16@200[1000]/(2) Φ14@200[2000]</td></tr>
<tr><td class="rn">5</td><td class="nm lnk">垂直分布钢筋</td><td class="vl">(2) Φ12@200</td></tr>
<tr><td class="rn">6</td><td class="nm lnk">拉筋</td><td class="vl">Φ6@600*600</td></tr>
<tr><td class="rn">7</td><td class="nm">备注</td><td class="vl"></td></tr>
<tr><td class="rn">8</td><td class="gr"><span class="tg-box">-</span>其它属性</td><td></td></tr>
<tr><td class="rn">9</td><td class="sub">其它钢筋</td><td></td></tr>
<tr><td class="rn">10</td><td class="sub">汇总信息</td><td class="vl">剪力墙</td></tr>
<tr><td class="rn">11</td><td class="sub">保护层厚度(mm)</td><td class="vl">(15)</td></tr>
<tr><td class="rn">12</td><td class="sub">压墙筋</td><td></td></tr>
<tr><td class="rn">13</td><td class="sub">纵筋构造</td><td class="vl">设置插筋</td></tr>
<tr><td class="rn">14</td><td class="sub">插筋信息</td><td></td></tr>
<tr><td class="rn">15</td><td class="sub">水平钢筋拐角增</td><td class="vl">否</td></tr>
<tr><td class="rn">16</td><td class="sub">计算设置</td><td class="vl">按默认计算设置计算</td></tr>
<tr><td class="rn">17</td><td class="sub">节点设置</td><td class="vl">按默认节点设置计算</td></tr>
<tr><td class="rn">18</td><td class="sub">搭接设置</td><td class="vl">按默认搭接设置计算</td></tr>
<tr><td class="rn">19</td><td class="sub">起点顶标高(m)</td><td class="vl">层顶标高(4.95)</td></tr>
<tr><td class="rn">20</td><td class="sub">终点顶标高(m)</td><td class="vl">层顶标高(4.95)</td></tr>
<tr><td class="rn">21</td><td class="sub">起点底标高(m)</td><td class="vl">层底标高(-0.05)</td></tr>
<tr><td class="rn">22</td><td class="sub sub-end">终点底标高(m)</td><td class="vl">层底标高(-0.05)</td></tr>
<tr><td class="rn">23</td><td class="gr"><span class="tg-box">+</span>锚固搭接</td><td></td></tr>
<tr><td class="rn">38</td><td class="gr"><span class="tg-box">+</span>显示样式</td><td></td></tr>
</tbody>
</table>
</div>
<div class="pane-title pane-low"><span>构件列表</span><span class="pin-x"><svg width="9" height="11" viewBox="0 0 9 11"><path d="M2 1h5v5h1v1H1V6h1zM4 7h1v4H4z" fill="#222"/></svg><svg width="9" height="9" viewBox="0 0 9 9"><path d="M1 1l7 7M8 1L1 8" stroke="#222"/></svg></span></div>
<div class="list-tools">
<svg class="ic"><use href="#i-new"/></svg><span>新建</span><span class="caret-mk mx-0"></span>
<svg class="ic ms-1" viewBox="0 0 14 14"><path d="M2 2l10 10M12 2L2 12" stroke="#333" stroke-width="1.800"/></svg>
<svg class="ic ms-1"><use href="#i-dup"/></svg>
</div>
<div class="input-group search-box flex-nowrap">
<input class="form-control" type="text" placeholder="搜索构件...">
<span class="input-group-text"><svg class="ic"><use href="#i-glass"/></svg></span>
</div>
<div class="comp-tree">
<svg class="tree-arrow" width="11" height="8" viewBox="0 0 11 8"><path d="M1 1l4.500 4.500L10 1" fill="none" stroke="#444" stroke-width="1.600"/></svg>
<span class="tree-dots"></span>
<div class="tree-line tl-root"><svg class="ic"><use href="#i-shear"/></svg>剪力墙</div>
<div class="tree-line tree-hit tl-one"><svg class="ic ic-s"><use href="#i-rebar"/></svg>JLQ-1</div>
<div class="tree-line tl-two"><svg class="ic ic-s"><use href="#i-rebar"/></svg>JLQ-2</div>
</div>
</div>

<div class="splitter"></div>

<div class="right-pane">

<div class="tools-row row-b">
<div class="tb-band band-b">
<span class="grip gr-b"></span>
<span class="tb-item tb-off"><svg class="ic"><use href="#i-del"/></svg>删除</span><span class="tb-sep sep-mid"></span>
<span class="tb-item tb-off"><svg class="ic"><use href="#i-copy"/></svg>复制</span>
<span class="tb-item tb-off"><svg class="ic"><use href="#i-mirror"/></svg>镜像</span><span class="tb-sep sep-mid"></span>
<span class="tb-item tb-off"><svg class="ic"><use href="#i-move"/></svg>移动</span>
<span class="tb-item tb-off"><svg class="ic"><use href="#i-spin"/></svg>旋转</span><span class="tb-sep sep-mid"></span>
<span class="tb-item tb-off"><svg class="ic"><use href="#i-extend"/></svg>延伸</span>
<span class="tb-item tb-off"><svg class="ic"><use href="#i-trim"/></svg>修剪</span><span class="tb-sep sep-mid"></span>
<span class="tb-item tb-off"><svg class="ic"><use href="#i-break"/></svg>打断</span>
<span class="tb-item tb-off mg1"><svg class="ic"><use href="#i-break"/></svg>合并</span>
<span class="tb-item tb-off"><svg class="ic"><use href="#i-split"/></svg>分割</span><span class="tb-sep sep-mid"></span>
<span class="tb-item tb-off"><svg class="ic"><use href="#i-align"/></svg>对齐</span><span class="caret-mk car-r4"></span>
<span class="tb-item tb-off"><svg class="ic"><use href="#i-offset"/></svg>偏移</span>
<span class="tb-item tb-off"><svg class="ic"><use href="#i-stretch"/></svg>拉伸</span><span class="tb-sep sep-mid"></span>
<span class="tb-item tb-off"><svg class="ic"><use href="#i-grip"/></svg>设置夹点</span>
</div>
</div>

<div class="tools-row row-c">
<div class="tb-band band-c1">
<div class="fake-select sel-59">首层<span class="caret-mk me-0"></span></div>
<div class="fake-select sel-68">墙<span class="caret-mk me-0"></span></div>
<div class="fake-select sel-62">剪力墙<span class="caret-mk me-0"></span></div>
<div class="fake-select sel-70">JLQ-1<span class="caret-mk me-0"></span></div>
<span class="tb-sep sep-e"></span>
<span class="tb-item tb-on box-51 mg2"><svg class="ic"><use href="#i-prop"/></svg>属性</span>
<span class="tb-item tb-on box-75"><svg class="ic"><use href="#i-edit"/></svg>编辑钢筋</span>
<span class="tb-item tb-on box-75"><svg class="ic"><use href="#i-list"/></svg>构件列表</span>
<span class="tb-item"><svg class="ic"><use href="#i-pick"/></svg>拾取构件</span>
</div>
<div class="tb-band band-c2">
<span class="grip gr-c"></span>
<span class="tb-item"><svg class="ic"><use href="#i-two"/></svg>两点</span>
<span class="tb-item"><svg class="ic"><use href="#i-para"/></svg>平行</span>
<span class="tb-item mg2"><svg class="ic"><use href="#i-angle"/></svg>点角</span><span class="caret-mk car-s"></span>
<span class="tb-item"><svg class="ic"><use href="#i-aux"/></svg>三点辅轴</span><span class="caret-mk"></span>
</div>
</div>

<div class="tools-row row-d">
<div class="tb-band band-d">
<span class="grip gr-d"></span>
<span class="tb-item"><svg class="ic"><use href="#i-arrow"/></svg>选择</span><span class="caret-mk"></span><span class="tb-sep sep-c"></span>
<span class="tb-item"><svg class="ic"><use href="#i-line"/></svg>直线</span>
<span class="tb-item mg2"><svg class="ic"><use href="#i-addlen"/></svg>点加长度</span>
<span class="tb-item"><svg class="ic"><use href="#i-arc"/></svg>三点画弧</span><span class="caret-mk car-nl mg2 me-0"></span>
<div class="fake-select sel-53"><span class="caret-mk me-0"></span></div>
<span class="tb-item mg4"><svg class="ic"><use href="#i-rect"/></svg>矩形</span><span class="tb-sep sep-mid"></span>
<span class="tb-item"><svg class="ic"><use href="#i-smart"/></svg>智能布置</span><span class="caret-mk car-nl car-s"></span><span class="tb-sep sep-mid"></span>
<span class="tb-item"><svg class="ic"><use href="#i-segm"/></svg>修改墙段属性</span>
<span class="tb-item"><svg class="ic"><use href="#i-elev"/></svg>查改标高</span>
<span class="tb-item mg2"><svg class="ic"><use href="#i-base"/></svg>墙底平齐基础底</span>
<span class="tb-item"><svg class="ic"><use href="#i-base"/></svg>平齐底</span>
</div>
</div>

<svg class="canvas-3d" viewBox="630 126 838 588" xmlns="http://www.w3.org/2000/svg">
<g fill="none" stroke="#0a7a0a" stroke-width="1">
<path d="M655 219L1172 228 1390 232M697 261L1395 275M628 205L678 252M697 272L726 300M630 642L840 647M630 558L765 560M630 473L672 473M1337 190L1387 232M1428 276L1468 314M1167 257L1228 316M862 652L926 714M901 690L1468 702M1357 665L1407 714M630 558L732 643M1130 442L1250 461M1370 238L1394 227M1428 277L1440 270M1170 277L1192 266M833 390L870 370M1085 190L1170 270M711 655L756 668M892 695L912 684"/>
<g stroke-width="1.100"><path d="M643 206l8 4 4 8-4 8-8 4-8-4-4-8 4-8z"/><path d="M643 432l8 4 4 8-4 8-8 4-8-4-4-8 4-8z"/><path d="M643 461l8 4 4 8-4 8-8 4-8-4-4-8 4-8z"/><path d="M643 545l8 4 4 8-4 8-8 4-8-4-4-8 4-8z"/><path d="M643 630l8 4 4 8-4 8-8 4-8-4-4-8 4-8z"/><path d="M913 688l8 4 4 8-4 8-8 4-8-4-4-8 4-8z"/><path d="M1156 688l8 4 4 8-4 8-8 4-8-4-4-8 4-8z"/><path d="M1398 688l8 4 4 8-4 8-8 4-8-4-4-8 4-8z"/><path d="M1327 168l8 4 4 8-4 8-8 4-8-4-4-8 4-8z"/><path d="M833 158l8 4 4 8-4 8-8 4-8-4-4-8 4-8z"/><path d="M1080 163l8 4 4 8-4 8-8 4-8-4-4-8 4-8z"/></g>
</g>
<g fill="none" stroke="#f00" stroke-width="1.300">
<path d="M697 304L1375 317M1422 318L1468 319M697 389L1363 402M1410 403L1468 404M672 473L1350 487M1396 488L1468 490M765 560L1340 572M1385 573L1468 575M880 648L1328 657M1373 657L1468 660"/>
<path stroke-width="1" d="M630 433L834 627M1228 316L1357 436M1400 476L1468 540M1139 458L1328 636M735 313L1095 640"/>
<path stroke="#8a0000" stroke-width="1" d="M672 473L833 390"/>
</g>
<path d="M767 125L1043 125 1155 232 1102 651 742 305z" fill="url(#mesh-face)"/>
<path d="M752 125L767 125 742 305 726 305z" fill="url(#mesh-strip)"/>
<path d="M1155 232L1172 232 1112 651 1100 651z" fill="url(#mesh-strip)"/>
<path d="M1043 125L1058 125 1172 232 1155 232z" fill="url(#mesh-strip)"/>
<path d="M726 305L742 305 1105 640 1100 651z" fill="url(#mesh-strip)"/>
<clipPath id="face-clip"><path d="M767 125L1043 125 1155 232 1140 350 1122 490 1102 651 742 305z"/></clipPath>
<g clip-path="url(#face-clip)"><path fill="none" stroke="#0ff" d="M738 125l400 380M751 125l400 380M764 125l400 380M777 125l400 380M790 125l400 380M803 125l400 380M816 125l400 380M829 125l400 380M842 125l400 380"/></g>
<path d="M752 125L726 305 1100 651 1112 651 1172 232 1058 125M767 125L742 305 1105 640M1043 125L1155 232 1100 651M1155 232H1172M726 305H742" fill="none" stroke="#fff" stroke-width="2"/>
<path d="M843 224L888 255M843 224L868 258M843 224L887 265M930 305L1027 397" fill="none" stroke="#f0f" stroke-width="1.800"/>
<path d="M752 137H767M1132 398H1147M1128 417H1142M1126 433H1140M1124 449H1138M1122 466H1136M1121 482H1135" stroke="#ff0" stroke-width="1.300"/>
<text class="cad-dim" x="781" y="254">3000</text>
<text class="cad-dim" x="1027" y="259">3000</text>
<text class="cad-dim" x="855" y="214">12000</text>
<text class="cad-grn" x="932" y="318">净长-保护层+设定弯折-保护层+设定弯折</text>
<text class="cad-grn" x="932" y="338">12000-15+10*d-15+10*d</text>
<text class="cad-grn" x="757" y="147">(10*d)</text>
<text class="cad-grn" x="1127" y="493">(10*d)</text>
<text class="cad-txt" x="1122" y="475">10*d</text>
<path d="M894 222L928 222 939 233 880 652 846 652 834 640z" fill="#5900ac"/>
<path d="M894 222L905 233 846 652 834 640z" fill="#440090"/>
<path d="M894 222L928 222 939 233 905 233z" fill="#7000e4"/>
<path d="M1388 232L1420 232 1433 243 1374 662 1340 662 1328 650z" fill="#5900ac"/>
<path d="M1388 232L1399 243 1340 662 1328 650z" fill="#440090"/>
<path d="M1388 232L1420 232 1433 243 1399 243z" fill="#7000e4"/>
<g fill="none" stroke="#c8c8c8" stroke-opacity=".6">
<circle cx="1132" cy="421" r="261"/>
<circle cx="1132" cy="158" r="16"/><circle cx="875" cy="421" r="16"/><circle cx="1393" cy="421" r="16"/><circle cx="1132" cy="681" r="16"/>
<path d="M1116 158H1148M875 405V437M1393 405V437M1116 681H1148"/>
</g>
<text class="cad-big" x="1274" y="264">3000</text>
<text class="cad-big" x="1026" y="712">3000</text>
<text class="cad-big" x="1272" y="718">3000</text>
<text class="cad-big" transform="rotate(-90 651 614)" x="651" y="614">3000</text>
<text class="cad-lbl" x="643" y="223">2</text><text class="cad-lbl" x="643" y="449">1</text><text class="cad-lbl" x="643" y="478">C</text><text class="cad-lbl" x="643" y="562">B</text><text class="cad-lbl" x="643" y="647">A</text><text class="cad-lbl" x="913" y="705">1</text><text class="cad-lbl" x="1156" y="705">2</text><text class="cad-lbl" x="1398" y="705">3</text><text class="cad-lbl" x="1327" y="186">5</text><text class="cad-lbl" x="833" y="175">3</text><text class="cad-lbl" x="1080" y="180">4</text>
<path d="M683 664L690 625" stroke="#0a84ff" stroke-width="4"/><path d="M690 618L695 630 686 628z" fill="#0a84ff"/>
<path d="M683 664L670 650" stroke="#1fe01f" stroke-width="4"/>
<path d="M683 664H722" stroke="#f00" stroke-width="4"/><path d="M730 664L720 659V669z" fill="#f00"/>
<text class="cad-z" x="677" y="623">Z</text>
<text class="cad-x" x="716" y="664">X</text>
</svg>

<div class="tools-row row-e">
<div class="tb-band band-e1">
<span class="grip gr-e"></span>
<span class="tb-item"><svg class="ic"><use href="#i-orth"/></svg>正交</span>
<span class="tb-item tb-on box-75 mg1"><svg class="ic"><use href="#i-snap"/></svg>对象捕捉</span>
<span class="tb-item"><svg class="ic"><use href="#i-dyn"/></svg>动态输入</span>
</div>
<div class="tb-band band-e2">
<span class="grip gr-f"></span>
<span class="tb-item"><svg class="ic"><use href="#i-cross"/></svg>交点</span>
<span class="tb-item tb-on box-51 mg1"><svg class="ic"><use href="#i-perp"/></svg>垂点</span>
<span class="tb-item tb-on box-51"><svg class="ic"><use href="#i-midp"/></svg>中点</span>
<span class="tb-item"><svg class="ic"><use href="#i-top"/></svg>顶点</span>
<span class="tb-item mg1"><svg class="ic"><use href="#i-coord"/></svg>坐标</span>
</div>
<div class="tb-band band-e3">
<span class="grip gr-g"></span>
<div class="fake-select sel-57">不偏移<span class="caret-mk me-0"></span></div>
<span class="tb-sep sep-f"></span><span class="tb-off">X=</span>
<div class="num-box">0</div><span class="tb-off mg2">mm</span><span class="tb-off mg7">Y=</span>
<div class="num-box">0</div><span class="tb-off mg1">mm</span>
<input class="form-check-input rotate-box" type="checkbox" aria-label="旋转">
<span class="mg8">旋转</span>
<div class="num-box num-end">0.</div>
</div>
</div>

<div class="tools-row row-f">
<span class="lead-f"><svg width="10" height="10" viewBox="0 0 10 10"><path d="M0 0h10v10H0z" fill="#eee" stroke="#777"/><path d="M2 2l6 6M8 2L2 8" stroke="#a33" stroke-width="1.400"/></svg></span>
<span class="tb-item px-0"><svg class="ic"><use href="#i-first"/></svg></span>
<span class="tb-item px-0 mg8"><svg class="ic"><use href="#i-prev"/></svg></span>
<span class="tb-item px-0 mg7"><svg class="ic"><use href="#i-next"/></svg></span>
<span class="tb-item px-0 mg7"><svg class="ic"><use href="#i-last"/></svg></span><span class="tb-sep sep-mid"></span>
<span class="tb-item px-0 mg1"><svg class="ic"><use href="#i-up"/></svg></span>
<span class="tb-item px-0 mg6"><svg class="ic"><use href="#i-down"/></svg></span><span class="tb-sep sep-d"></span>
<span class="tb-item mg1"><svg class="ic"><use href="#i-ins"/></svg>插入</span>
<span class="tb-item"><svg class="ic"><use href="#i-rm"/></svg>删除</span>
<span class="tb-item"><svg class="ic"><use href="#i-scale"/></svg>缩尺配筋</span>
<span class="tb-item"><svg class="ic"><use href="#i-info"/></svg>钢筋信息</span>
<span class="tb-item"><svg class="ic"><use href="#i-lib"/></svg>钢筋图库</span>
<span class="tb-item"><svg class="ic"><use href="#i-other"/></svg>其他</span><span class="caret-mk car-r4"></span>
<span class="tb-item">关闭</span><span class="tb-sep sep-e"></span>
<span class="tb-item">单构件钢筋总重(kg)：1364.229</span>
</div>

<div class="rebar-wrap">
<table class="table grid-rebar">
<colgroup><col class="cw-33"><col class="cw-74"><col class="cw-55"><col class="cw-37"><col class="cw-33"><col class="cw-201"><col class="cw-166"><col class="cw-156"><col class="cw-61"><col class="cw-24"></colgroup>
<thead><tr><th></th><th class="bar-end">筋号</th><th>直径(mm)</th><th>级别</th><th>图号</th><th class="hd-on">图形</th><th>计算公式</th><th>公式描述</th><th>长度(mm)</th><th>根数</th></tr></thead>
<tbody>
<tr><td class="rn">1</td><td class="bar-end">墙身水平钢筋.1</td><td>12</td><td class="mid">Φ</td><td>64</td>
<td class="shp"><svg class="shp-svg"><path d="M39 8V22H160V8" fill="none" stroke="#000" stroke-width="2"/><text x="18" y="19">120</text><text x="99" y="19" fill="#f00" text-anchor="middle">11970</text><text x="163" y="20">120</text></svg></td>
<td>12000-15+10*d-15+10*d</td><td>净长-保护层+设定弯折-保护层+设定弯折</td><td>12210</td><td>20</td></tr>
<tr><td class="rn rn-on">2*</td><td class="bar-end">墙身水平钢筋.2</td><td>16</td><td class="mid">Φ</td><td>64</td>
<td class="shp shp-on"><svg class="shp-svg"><path d="M39 8V22H160V8" fill="none" stroke="#000" stroke-width="2"/><text x="18" y="19">160</text><text x="99" y="19" fill="#f00" text-anchor="middle">11970</text><text x="163" y="20">160</text></svg></td>
<td>12000-15+10*d-15+10*d</td><td>净长-保护层+设定弯折-保护层+设定弯折</td><td>12290</td><td>12</td></tr>
<tr><td class="rn">3</td><td class="bar-end">墙身水平钢筋.3</td><td>14</td><td class="mid">Φ</td><td>64</td>
<td class="shp"><svg class="shp-svg"><path d="M39 8V22H160V8" fill="none" stroke="#000" stroke-width="2"/><text x="18" y="19">140</text><text x="99" y="19" fill="#f00" text-anchor="middle">11970</text><text x="163" y="20">140</text></svg></td>
<td>12000-15+10*d-15+10*d</td><td>净长-保护层+设定弯折-保护层+设定弯折</td><td>12250</td><td>22</td></tr>
<tr><td class="rn">4</td><td class="bar-end">墙身垂直钢筋.1</td><td>12</td><td class="mid">Φ</td><td>18</td>
<td class="shp"><svg class="shp-svg"><path d="M33 11V24H171" fill="none" stroke="#000" stroke-width="2"/><text x="10" y="21">120</text><text x="97" y="17" fill="#f00" text-anchor="middle">4985</text></svg></td>
<td>5000-15+10*d</td><td>墙实际高度-保护层+设定弯折</td><td>5105</td><td></td></tr>
</tbody>
</table>
</div>

<div class="badge-float"><span class="badge-wan">万</span><span class="badge-a">A</span></div>
</div>
</div>

<div class="float-panel">
<div class="float-title">钢筋显示控制面板</div>
<div class="float-list">
<div class="form-check"><input class="form-check-input" type="checkbox" checked id="c1"><label for="c1">剪力墙水平筋</label></div>
<div class="form-check"><input class="form-check-input" type="checkbox" checked id="c2"><label for="c2">剪力墙垂直筋</label></div>
<div class="form-check"><input class="form-check-input" type="checkbox" checked id="c3"><label for="c3">下层墙体纵筋的露出长度</label></div>
<div class="form-check"><input class="form-check-input" type="checkbox" checked id="c4"><label for="c4">显示其它图元</label></div>
<div class="form-check"><input class="form-check-input" type="checkbox" checked id="c5"><label for="c5">显示详细公式</label></div>
</div>
</div>

<script src="https://cdn.jsdelivr.net/npm/bootstrap@5.3.1/dist/js/bootstrap.bundle.min.js"></script>
</body>
</html>
